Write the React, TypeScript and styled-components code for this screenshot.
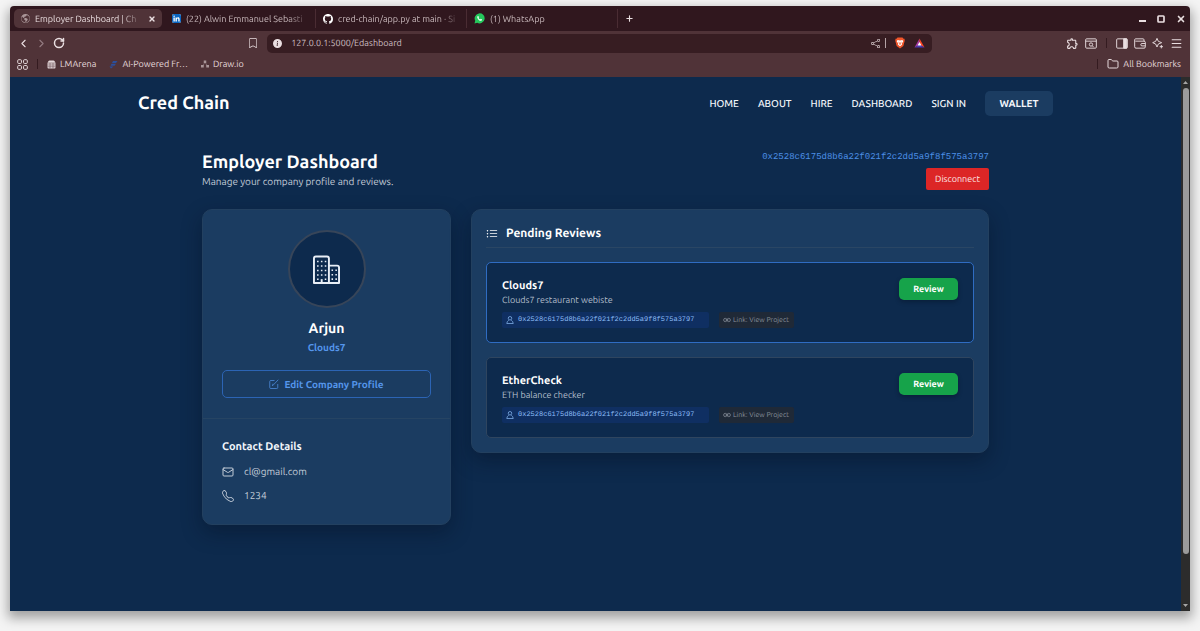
import React from "react";
import styled, { createGlobalStyle, css } from "styled-components";
import {
  BsListUl, BsTelephone, BsLinkedin, BsGithub, BsGlobeAmericas, BsBookmark, BsInfoCircleFill, BsShare,
} from "react-icons/bs";
import { MdOutlineExtension } from "react-icons/md";
import { ChevronLeft, ChevronRight, RotateCw, Folder, Menu, Plus, X, Square, Mail } from "lucide-react";

const Global = createGlobalStyle`
  *, *::before, *::after { box-sizing: border-box; }
  body { margin: 0; background: #f4f4f4; font-family: Ubuntu, "Noto Sans", sans-serif; text-rendering: geometricPrecision; }
  h1, h2, h3, p, ul { margin: 0; padding: 0; font-weight: inherit; font-size: inherit; }
  button, input { font-family: inherit; text-rendering: inherit; margin: 0; padding: 0; border: 0; background: none; color: inherit; }
  button { cursor: pointer; }
  a { color: inherit; text-decoration: none; }
  svg { flex: none; display: block; }
`;

const Desktop = styled.div`
  min-height: 100vh;
  padding: 6px 10px 20px;
  display: flex;
`;

const Window = styled.div`
  flex: 1;
  min-width: 0;
  display: flex;
  flex-direction: column;
  border-radius: 4px 4px 0 0;
  overflow: hidden;
  box-shadow: 0 5px 12px 2px rgba(0, 0, 0, 0.35);
`;

/* Browser chrome */

const TabStrip = styled.div`
  height: 25px;
  background: #30171e;
  color: #c9b9bc;
  display: flex;
  align-items: center;
  padding: 0 4px;
`;

const Tab = styled.div<{ $active?: boolean }>`
  flex: 0 1 151px;
  min-width: 0;
  display: flex;
  align-items: center;
  ${(p) => !p.$active && css`border-right: 1px solid #4a2c33;`}
`;

const TabBody = styled.div<{ $active?: boolean }>`
  flex: 1;
  min-width: 0;
  height: 19px;
  margin-right: 3px;
  padding: 0 ${(p) => (p.$active ? 6 : 2)}px 0 7px;
  border-radius: 5px;
  background: ${(p) => (p.$active ? "#503338" : "transparent")};
  color: ${(p) => (p.$active ? "#e8dcde" : "inherit")};
  display: flex;
  align-items: center;
  gap: 5px;
`;

const TabLabel = styled.button`
  flex: 1;
  min-width: 0;
  text-align: left;
  font-size: 9px;
  line-height: 16px;
  white-space: nowrap;
  overflow: hidden;
  mask-image: linear-gradient(to right, #000 calc(100% - 22px), transparent);
`;

const LinkedInMark = styled(BsLinkedin)`
  background: #fff;
  border-radius: 2px;
  color: #0a66c2;
`;

const IconButton = styled.button<{ $dim?: boolean }>`
  display: flex;
  align-items: center;
  justify-content: center;
  color: ${(p) => (p.$dim ? "#937b80" : "#eadfe1")};
`;

const WindowControls = styled.div`
  margin-left: auto;
  display: flex;
  align-items: center;
  gap: 11px;
`;

const Toolbar = styled.div`
  height: 24px;
  background: #503338;
  color: #eadfe1;
  display: grid;
  grid-template-columns: 23fr 68fr 25fr;
  align-items: center;
  padding: 0 7px;
`;

const ToolGroup = styled.div<{ $end?: boolean }>`
  display: flex;
  align-items: center;
  gap: ${(p) => (p.$end ? 6 : 5)}px;
  justify-content: ${(p) => (p.$end ? "flex-end" : "flex-start")};
`;

const AddressArea = styled.div`
  display: flex;
  align-items: center;
  gap: 9px;
  min-width: 0;
`;

const AddressBar = styled.div`
  flex: 1;
  min-width: 0;
  height: 19px;
  padding: 0 7px 0 6px;
  border-radius: 5px;
  background: #371d22;
  display: flex;
  align-items: center;
  gap: 9px;
`;

const ShareGroup = styled.div`
  display: flex;
  align-items: center;
  gap: 5px;
`;

const AddressInput = styled.input`
  flex: 1;
  min-width: 0;
  font-size: 9px;
  line-height: 16px;
  color: #cdbfc1;
  outline: 0;
`;

const Divider = styled.span<{ $light?: boolean; $spaced?: boolean }>`
  width: 1px;
  height: 10px;
  margin: 0 ${(p) => (p.$spaced ? 3 : 0)}px;
  background: ${(p) => (p.$light ? "#b5a3a6" : "#341b20")};
`;

const BookmarkBar = styled.div`
  height: 22px;
  background: #503338;
  color: #e6dadc;
  display: flex;
  align-items: center;
  gap: 9px;
  padding: 0 9px 4px 7px;
`;

const BookmarkList = styled.div`
  flex: 1;
  display: flex;
  gap: 13px;
`;

const Bookmark = styled.a`
  display: flex;
  align-items: center;
  gap: 4px;
  font-size: 9px;
  line-height: 16px;
  white-space: nowrap;
`;

/* Page */

const Viewport = styled.div`
  flex: 1;
  display: flex;
  background: #0d2a4d;
`;

const Page = styled.div`
  flex: 1;
  min-width: 0;
  padding: 14px 20px 24px;
`;

const Scrollbar = styled.div`
  width: 9px;
  background: #2c2c2c;
  padding: 4px 1px;
  display: flex;
  flex-direction: column;
  align-items: center;
  gap: 4px;
`;

const Track = styled.div`
  flex: 1;
  width: 6px;
`;

const Thumb = styled.div`
  height: 91%;
  border-radius: 4px;
  background: #9b9b9b;
`;

const SiteHeader = styled.header`
  max-width: 915px;
  margin: 0 auto;
  display: flex;
  align-items: center;
  justify-content: space-between;
`;

const Brand = styled.a`
  font-size: 18px;
  line-height: 25px;
  font-weight: 700;
  color: #fff;
`;

const Nav = styled.nav`
  display: flex;
  align-items: center;
  gap: 19px;
  font-size: 10px;
  line-height: 25px;
  font-weight: 500;
  color: #f2f6fb;
`;

const WalletButton = styled.button`
  width: 68px;
  height: 25px;
  border-radius: 5px;
  background: #1b3c61;
  font-size: 10px;
  font-weight: 600;
`;

const Main = styled.main`
  max-width: 787px;
  margin: 34px auto 0;
`;

const PageHead = styled.div`
  display: flex;
  align-items: flex-start;
  justify-content: space-between;
`;

const PageTitle = styled.h1`
  font-size: 18px;
  line-height: 25px;
  font-weight: 700;
  color: #fff;
`;

const Subtitle = styled.p`
  font-size: 10px;
  line-height: 14px;
  color: #c3ccd8;
`;

const Account = styled.div`
  display: flex;
  flex-direction: column;
  align-items: flex-end;
  gap: 4px;
`;

const AccountAddress = styled.span`
  font: 9px/14px "Liberation Mono", monospace;
  color: #4c8fe6;
`;

const DisconnectButton = styled.button`
  width: 63px;
  height: 22px;
  border-radius: 2px;
  background: #dc2626;
  color: #fde8e8;
  font-size: 9px;
`;

const Columns = styled.div`
  margin-top: 19px;
  display: grid;
  grid-template-columns: 249px minmax(0, 1fr);
  gap: 20px;
  align-items: start;
`;

const Card = styled.section`
  border: 1px solid #23405f;
  border-radius: 10px;
  background: #1b3c61;
  box-shadow: 0 8px 20px rgba(4, 16, 32, 0.4);
`;

const Profile = styled.div`
  padding: 20px 19px;
  display: flex;
  flex-direction: column;
  align-items: center;
`;

const Avatar = styled.div`
  width: 78px;
  height: 78px;
  border: 2px solid #374559;
  border-radius: 50%;
  background: #0d2a4d;
  color: #e8eef6;
  display: flex;
  align-items: center;
  justify-content: center;
`;

const PersonName = styled.h2`
  margin-top: 10px;
  font-size: 14px;
  line-height: 20px;
  font-weight: 700;
  color: #fff;
`;

const CompanyName = styled.p`
  margin-top: 3px;
  font-size: 10px;
  line-height: 14px;
  font-weight: 600;
  color: #5596ec;
`;

const EditButton = styled.button`
  margin-top: 15px;
  width: 100%;
  height: 28px;
  border: 1px solid #2c64b4;
  border-radius: 5px;
  color: #5596ec;
  display: flex;
  align-items: center;
  justify-content: center;
  gap: 5px;
  font-size: 10px;
  font-weight: 600;
`;

const Contact = styled.div`
  border-top: 1px solid #264463;
  padding: 20px 19px 16px;
`;

const ContactTitle = styled.h3`
  font-size: 11px;
  line-height: 16px;
  font-weight: 600;
  color: #f2f6fb;
  margin-bottom: 5px;
`;

const ContactRow = styled.p`
  display: flex;
  align-items: center;
  gap: 10px;
  font-size: 10px;
  line-height: 24px;
  color: #c3ccd8;
`;

const Reviews = styled(Card)`
  padding: 14px;
`;

const ReviewsTitle = styled.h2`
  display: flex;
  align-items: center;
  gap: 8px;
  padding-bottom: 4px;
  border-bottom: 1px solid #2a4664;
  margin-bottom: 14px;
  font-size: 12px;
  line-height: 19px;
  font-weight: 700;
  color: #fff;
`;

const ReviewList = styled.div`
  display: flex;
  flex-direction: column;
  gap: 14px;
`;

const ReviewItem = styled.article<{ $active?: boolean }>`
  border: 1px solid ${(p) => (p.$active ? "#2f6cc2" : "#2f455f")};
  border-radius: 5px;
  background: #0d2a4d;
  padding: 15px 15px 14px;
  display: flex;
  justify-content: space-between;
  align-items: flex-start;
`;

const ReviewName = styled.h3`
  font-size: 11px;
  line-height: 16px;
  font-weight: 600;
  color: #fff;
`;

const ReviewText = styled.p`
  font-size: 9px;
  line-height: 13px;
  color: #b4bfcc;
`;

const Tags = styled.div`
  margin-top: 5px;
  display: flex;
  gap: 10px;
`;

const WalletTag = styled.span`
  min-width: 207px;
  height: 16px;
  padding: 0 4px;
  border-radius: 2px;
  background: #0f2f62;
  color: #8dbdf7;
  display: flex;
  align-items: center;
  gap: 4px;
  font: 7px/16px "Liberation Mono", monospace;
`;

const LinkTag = styled.a`
  height: 16px;
  padding: 0 5px 0 4px;
  border-radius: 2px;
  background: #1f2937;
  color: #8b929d;
  display: flex;
  align-items: center;
  gap: 2px;
  font-size: 7px;
`;

const ReviewButton = styled.button`
  width: 59px;
  height: 22px;
  border-radius: 5px;
  background: #16a34a;
  color: #fff;
  font-size: 9px;
  font-weight: 700;
  box-shadow: 0 2px 4px rgba(4, 16, 32, 0.4);
`;

const stroke = { fill: "none", stroke: "currentColor", strokeWidth: 1.4 } as const;

const BuildingsIcon = () => (
  <svg width="27" height="29" viewBox="0 0 28 30" fill="none" stroke="currentColor" strokeWidth="2" strokeLinejoin="round">
    <path d="M1 29V3.500Q1 1.500 3 1.500h11.500q2 0 2 2V29z" />
    <path d="M16.500 11H25q2 0 2 2v16H16.500" />
    <path d="M9 29v-4" />
    <path d="M5 6v20M9 6v16M13 6v20" strokeDasharray="1.600 3" strokeWidth="1.6" />
    <path d="M20 15v11M24 15v11" strokeDasharray="1.600 3" strokeWidth="1.6" />
  </svg>
);

const EditIcon = () => (
  <svg width="10" height="10" viewBox="0 0 20 20" {...stroke}>
    <path d="M11 3H3.500Q1.500 3 1.500 5v12q0 2 2 2h12q2 0 2-2V10" />
    <path d="M18.500 1.500L10 10.500l-3 3 1-4" />
  </svg>
);

const UserIcon = () => (
  <svg width="8" height="8" viewBox="0 0 16 16" {...stroke}>
    <circle cx="8" cy="4.500" r="3.500" />
    <path d="M5.500 8.500Q2 10.500 1.500 15h13Q14 10.500 10.500 8.500" />
  </svg>
);

const ChainIcon = () => (
  <svg width="8" height="6" viewBox="0 0 16 12" {...stroke}>
    <circle cx="4.500" cy="6" r="3.300" />
    <circle cx="11.500" cy="6" r="3.300" />
    <path d="M5 6h6" />
  </svg>
);

const WhatsAppIcon = () => (
  <svg width="11" height="11" viewBox="0 0 22 22">
    <path d="M1 21l1.500-5.500A10 10 0 1 1 6.500 19.500z" fill="#25c75c" />
    <path d="M7.200 6.500q1-1.200 1.800 0l.9 2-.9 1.400q1.200 2.200 3.400 3.100l1.300-1.300 2.300 1.200q.3 1.900-1.500 2.500-2.300.6-5-1.600-3-2.600-3.100-5.200 0-1.200.8-2.100z" fill="#fff" />
  </svg>
);

const MinimizeIcon = () => (
  <svg width="7" height="9" viewBox="0 0 7 9"><path d="M0 6h7v2H0z" fill="currentColor" /></svg>
);

const BraveIcon = () => (
  <svg width="10" height="12" viewBox="0 0 20 24">
    <path d="M5 1h10l2 2.500 2-.2.5 4.200-2.800 10.500L10 23l-6.700-5L.5 7.500 1 3.300l2 .2z" fill="#f1562b" />
    <path d="M5 6l5 1 5-1 1.500 3-3 4 .5 2.500-4 3-4-3L6.500 13l-3-4z" fill="#fff" />
    <path d="M7.500 9.500l2.500 6 2.500-6" fill="none" stroke="#f1562b" strokeWidth="1.4" />
  </svg>
);

const RewardsIcon = () => (
  <svg width="11" height="10" viewBox="0 0 22 20">
    <path d="M11 1L1 19l10-6z" fill="#a83aa0" />
    <path d="M11 1l10 18-10-6z" fill="#ff4724" />
    <path d="M1 19h20l-10-6z" fill="#4b3bb8" />
    <path d="M11 8l-4 7h8z" fill="#fff" />
  </svg>
);

const AppsIcon = () => (
  <svg width="11" height="11" viewBox="0 0 16 16" {...stroke}>
    <rect x="1" y="1" width="5.5" height="5.5" rx="1.5" />
    <rect x="9.5" y="1" width="5.5" height="5.5" rx="1.5" />
    <rect x="1" y="9.5" width="5.5" height="5.5" rx="1.5" />
    <rect x="9.5" y="9.5" width="5.5" height="5.5" rx="1.5" />
  </svg>
);

const ArenaIcon = () => (
  <svg width="9" height="9" viewBox="0 0 18 18">
    <path d="M1 6l2-4q1-1 2-1h8q1 0 2 1l2 4v9q0 2-2 2H3q-2 0-2-2z" fill="#e6dadc" />
    <path d="M1 6h16M1 10h16M1 13.500h16M6 6v11M12 6v11" stroke="#6d5257" strokeWidth="1.2" />
  </svg>
);

const SwooshIcon = () => (
  <svg width="9" height="9" viewBox="0 0 18 18" fill="#2b4f9c">
    <path d="M8 2h9l-3 4H6zM5 7.500h9l-3 4H3zM1 13h8l-5 4z" />
  </svg>
);

const NodesIcon = () => (
  <svg width="8" height="8" viewBox="0 0 16 16" fill="#a99598">
    <path d="M8 4L3 13M8 4l5 9" stroke="#a99598" />
    <rect x="5.5" y="1" width="5" height="5" />
    <rect x="0" y="10" width="5.5" height="5" />
    <rect x="10.5" y="10" width="5.5" height="5" />
  </svg>
);

const SearchWindowIcon = () => (
  <svg width="12" height="11" viewBox="0 0 18 16" {...stroke}>
    <rect x="1" y="1" width="16" height="14" rx="1.5" />
    <path d="M1 4.500h16M11 11.500l2 2" />
    <circle cx="9" cy="9.5" r="2.5" />
  </svg>
);

const SidebarIcon = () => (
  <svg width="12" height="11" viewBox="0 0 18 16" {...stroke}>
    <rect x="1" y="1" width="16" height="14" rx="1.5" />
    <path d="M11.500 1h4.500v14h-4.500z" fill="currentColor" />
  </svg>
);

const WalletIcon = () => (
  <svg width="12" height="11" viewBox="0 0 18 16" {...stroke}>
    <path d="M15 4.500V2.500Q15 1 13.500 1h-11Q1 1 1 2.500v10.500Q1 15 3 15h12q2 0 2-2V6.500q0-2-2-2H2" />
    <path d="M17 8h-5q-1.800 0-1.800 1.800t1.800 1.800h5" />
  </svg>
);

const SparkleIcon = () => (
  <svg width="12" height="12" viewBox="0 0 18 18" {...stroke}>
    <path d="M7.500 2l2 4.500 5 2-5 2-2 4.500-2-4.500-4.500-2 4.500-2z" />
    <path d="M14 12v5M11.500 14.500h5" />
  </svg>
);

const Arrow = ({ down }: { down?: boolean }) => (
  <svg width="5" height="3" viewBox="0 0 10 6" fill="#a5a5a5">
    <path d={down ? "M0 0h10L5 6z" : "M0 6h10L5 0z"} />
  </svg>
);

const address = "0x2528c6175d8b6a22f021f2c2dd5a9f8f575a3797";

const tabs = [
  { label: "Employer Dashboard | Ch", icon: <BsGlobeAmericas size={9} color="#a99598" />, active: true },
  { label: "(22) Alwin Emmanuel Sebasti", icon: <LinkedInMark size={9} /> },
  { label: "cred-chain/app.py at main · Si", icon: <BsGithub size={10} color="#fff" /> },
  { label: "(1) WhatsApp", icon: <WhatsAppIcon /> },
];

const reviews = [
  { name: "Clouds7", text: "Clouds7 restaurant webiste", active: true },
  { name: "EtherCheck", text: "ETH balance checker" },
];

export default function App() {
  return (
    <Desktop>
      <Global />
      <Window>
        <TabStrip>
          {tabs.map((t) => (
            <Tab key={t.label} $active={t.active}>
              <TabBody $active={t.active}>
                {t.icon}
                <TabLabel>{t.label}</TabLabel>
                {t.active && <IconButton aria-label="Close tab"><X size={8} strokeWidth={4} /></IconButton>}
              </TabBody>
            </Tab>
          ))}
          <TabBody>
            <IconButton aria-label="New tab"><Plus size={9} strokeWidth={3} /></IconButton>
          </TabBody>
          <WindowControls>
            <IconButton aria-label="Minimize"><MinimizeIcon /></IconButton>
            <IconButton aria-label="Maximize"><Square size={8} strokeWidth={5} /></IconButton>
            <IconButton aria-label="Close window"><X size={10} strokeWidth={4} /></IconButton>
          </WindowControls>
        </TabStrip>
        <Toolbar>
          <ToolGroup>
            <IconButton aria-label="Back"><ChevronLeft size={13} /></IconButton>
            <IconButton aria-label="Forward" $dim><ChevronRight size={13} /></IconButton>
            <IconButton aria-label="Reload"><RotateCw size={12} strokeWidth={3} /></IconButton>
          </ToolGroup>
          <AddressArea>
            <IconButton aria-label="Bookmark this page"><BsBookmark size={10} /></IconButton>
            <AddressBar>
              <BsInfoCircleFill size={9} />
              <AddressInput aria-label="Address" defaultValue="127.0.0.1:5000/Edashboard" />
              <ShareGroup>
                <IconButton aria-label="Share"><BsShare size={9} /></IconButton>
                <Divider $light />
              </ShareGroup>
              <BraveIcon />
              <RewardsIcon />
            </AddressBar>
          </AddressArea>
          <ToolGroup $end>
            <IconButton aria-label="Extensions"><MdOutlineExtension size={13} /></IconButton>
            <IconButton aria-label="Search tabs"><SearchWindowIcon /></IconButton>
            <Divider $spaced />
            <IconButton aria-label="Sidebar"><SidebarIcon /></IconButton>
            <IconButton aria-label="Browser wallet"><WalletIcon /></IconButton>
            <IconButton aria-label="Assistant"><SparkleIcon /></IconButton>
            <IconButton aria-label="Menu"><Menu size={13} /></IconButton>
          </ToolGroup>
        </Toolbar>
        <BookmarkBar>
          <IconButton aria-label="Apps"><AppsIcon /></IconButton>
          <Divider />
          <BookmarkList>
            <Bookmark href="#"><ArenaIcon />LMArena</Bookmark>
            <Bookmark href="#"><SwooshIcon />AI-Powered Fr…</Bookmark>
            <Bookmark href="#"><NodesIcon />Draw.io</Bookmark>
          </BookmarkList>
          <Divider />
          <Bookmark href="#"><Folder size={12} />All Bookmarks</Bookmark>
        </BookmarkBar>
        <Viewport>
          <Page>
            <SiteHeader>
              <Brand href="#">Cred Chain</Brand>
              <Nav>
                <a href="#">HOME</a>
                <a href="#">ABOUT</a>
                <a href="#">HIRE</a>
                <a href="#">DASHBOARD</a>
                <a href="#">SIGN IN</a>
                <WalletButton>WALLET</WalletButton>
              </Nav>
            </SiteHeader>
            <Main>
              <PageHead>
                <div>
                  <PageTitle>Employer Dashboard</PageTitle>
                  <Subtitle>Manage your company profile and reviews.</Subtitle>
                </div>
                <Account>
                  <AccountAddress>{address}</AccountAddress>
                  <DisconnectButton>Disconnect</DisconnectButton>
                </Account>
              </PageHead>
              <Columns>
                <Card>
                  <Profile>
                    <Avatar><BuildingsIcon /></Avatar>
                    <PersonName>Arjun</PersonName>
                    <CompanyName>Clouds7</CompanyName>
                    <EditButton><EditIcon />Edit Company Profile</EditButton>
                  </Profile>
                  <Contact>
                    <ContactTitle>Contact Details</ContactTitle>
                    <ContactRow><Mail size={12} strokeWidth={2} />cl@gmail.com</ContactRow>
                    <ContactRow><BsTelephone size={12} />1234</ContactRow>
                  </Contact>
                </Card>
                <Reviews>
                  <ReviewsTitle><BsListUl size={12} />Pending Reviews</ReviewsTitle>
                  <ReviewList>
                    {reviews.map((r) => (
                      <ReviewItem key={r.name} $active={r.active}>
                        <div>
                          <ReviewName>{r.name}</ReviewName>
                          <ReviewText>{r.text}</ReviewText>
                          <Tags>
                            <WalletTag><UserIcon />{address}</WalletTag>
                            <LinkTag href="#"><ChainIcon />Link: View Project</LinkTag>
                          </Tags>
                        </div>
                        <ReviewButton>Review</ReviewButton>
                      </ReviewItem>
                    ))}
                  </ReviewList>
                </Reviews>
              </Columns>
            </Main>
          </Page>
          <Scrollbar aria-hidden="true">
            <Arrow />
            <Track><Thumb /></Track>
            <Arrow down />
          </Scrollbar>
        </Viewport>
      </Window>
    </Desktop>
  );
}
